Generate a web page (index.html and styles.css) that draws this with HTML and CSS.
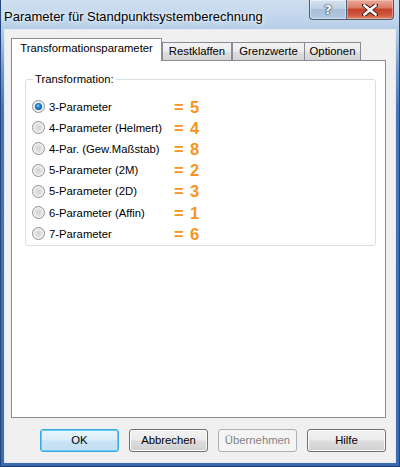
FILE: index.html
```html
<!DOCTYPE html>
<html lang="de">
<head>
<meta charset="utf-8">
<title>Parameter für Standpunktsystemberechnung</title>
<link rel="stylesheet" href="styles.css">
</head>
<body>
<div class="window">
  <div class="titlebar">
    <span class="title">Parameter für Standpunktsystemberechnung</span>
    <div class="caption-btns">
      <div class="cbtn help"><span class="qm">?</span></div>
      <div class="cbtn close">
        <svg width="16" height="12" viewBox="0 0 16 12">
          <path d="M2 1 L14 11 M14 1 L2 11" stroke="#4a1a12" stroke-width="4.4" stroke-linecap="round"/>
          <path d="M2.4 1.4 L13.6 10.6 M13.6 1.4 L2.4 10.6" stroke="#ffffff" stroke-width="2.6" stroke-linecap="round"/>
        </svg>
      </div>
    </div>
  </div>
  <div class="client">
    <div class="tabs">
      <div class="tab active">Transformationsparameter</div>
      <div class="tab w-rest">Restklaffen</div>
      <div class="tab w-grenz">Grenzwerte</div>
      <div class="tab w-opt">Optionen</div>
    </div>
    <div class="panel">
      <fieldset class="group">
        <legend>Transformation:</legend>
        <div class="rows">
          <div class="row"><span class="radio checked"></span><span class="label">3-Parameter</span><span class="eq">=</span><span class="num">5</span></div>
          <div class="row"><span class="radio"></span><span class="label">4-Parameter (Helmert)</span><span class="eq">=</span><span class="num">4</span></div>
          <div class="row"><span class="radio"></span><span class="label">4-Par. (Gew.Maßstab)</span><span class="eq">=</span><span class="num">8</span></div>
          <div class="row"><span class="radio"></span><span class="label">5-Parameter (2M)</span><span class="eq">=</span><span class="num">2</span></div>
          <div class="row"><span class="radio"></span><span class="label">5-Parameter (2D)</span><span class="eq">=</span><span class="num">3</span></div>
          <div class="row"><span class="radio"></span><span class="label">6-Parameter (Affin)</span><span class="eq">=</span><span class="num">1</span></div>
          <div class="row"><span class="radio"></span><span class="label">7-Parameter</span><span class="eq">=</span><span class="num">6</span></div>
        </div>
      </fieldset>
    </div>
    <div class="buttons">
      <div class="btn default">OK</div>
      <div class="btn">Abbrechen</div>
      <div class="btn disabled">Übernehmen</div>
      <div class="btn">Hilfe</div>
    </div>
  </div>
</div>
</body>
</html>
```
FILE: styles.css
```css
html, body {
  margin: 0;
  padding: 0;
}
body {
  width: 400px;
  height: 467px;
  overflow: hidden;
  font-family: "Liberation Sans", Arial, sans-serif;
}
.window {
  width: 400px;
  height: 467px;
  box-sizing: border-box;
  padding: 0 5px 5px 5px;
  background: linear-gradient(180deg, #cfdff0 0px, #bcd2ea 24px, #a6c2e4 40px, #6f98cf 70px, #4677bb 110px, #3a6bb2 100%);
  box-shadow: inset 1px 0 0 #23477c, inset -1px 0 0 #23477c, inset 0 -1px 0 #1e3c6a;
}
.titlebar {
  height: 30px;
  display: flex;
  align-items: flex-start;
}
.title {
  padding-top: 9px;
  margin-left: -1px;
  font-size: 13px;
  line-height: 15px;
  color: #000;
  white-space: nowrap;
  text-shadow: 0 0 6px rgba(255,255,255,0.9), 0 0 3px rgba(255,255,255,0.8);
}
.caption-btns {
  margin-left: auto;
  margin-right: 1px;
  display: flex;
}
.cbtn {
  height: 20px;
  box-sizing: border-box;
  border: 1px solid #4d5b70;
  border-top: none;
  display: flex;
  align-items: center;
  justify-content: center;
}
.help {
  width: 37px;
  border-right: none;
  border-bottom-left-radius: 4px;
  background: linear-gradient(180deg, #d5e1ee 0%, #c0d1e5 45%, #a9bed9 50%, #b3c8e2 100%);
  box-shadow: inset 0 0 0 1px rgba(255,255,255,0.45);
}
.qm {
  font-family: "DejaVu Sans", sans-serif;
  font-weight: bold;
  font-size: 13px;
  line-height: 13px;
  color: #fff;
  text-shadow: 0 0 1px #2d3c52, 0 0 1px #2d3c52, 0 0 2px #2d3c52;
}
.close {
  width: 48px;
  border-bottom-right-radius: 4px;
  background: linear-gradient(180deg, #e9a99a 0%, #db7f69 40%, #c6432a 50%, #cf5a40 80%, #e08a6c 100%);
  box-shadow: inset 0 0 0 1px rgba(255,220,210,0.45);
}
.close svg {
  display: block;
}
.client {
  height: 432px;
  box-sizing: border-box;
  background: #f0f0f0;
  padding: 8px 9px 0 6px;
  box-shadow: 0 0 0 1px #e3eaf3;
}
.tabs {
  display: flex;
  align-items: flex-end;
  height: 22px;
  position: relative;
  z-index: 1;
  font-size: 11.3px;
}
.tab {
  box-sizing: border-box;
  height: 18px;
  border: 1px solid #898c95;
  border-bottom: none;
  margin-right: -1px;
  background: linear-gradient(180deg, #f3f3f3 0%, #ebebeb 50%, #dedede 50%, #d6d6d6 100%);
  text-align: center;
  line-height: 16px;
  color: #000;
  white-space: nowrap;
}
.tab.active {
  width: 151px;
  height: 23px;
  margin-bottom: -1px;
  margin-right: 0;
  background: #fff;
  line-height: 19px;
}
.w-rest { width: 70px; }
.w-grenz { width: 73px; margin-left: 1px; }
.w-opt { width: 57px; }
.panel {
  height: 358px;
  box-sizing: border-box;
  border: 1px solid #898c95;
  background: #fff;
  padding: 11px 9px 0 13px;
}
.group {
  margin: 0;
  padding: 0;
  border: 1px solid #d5dfe5;
  border-radius: 3px;
  min-width: 0;
}
.group legend {
  margin-left: 7px;
  padding: 0 2px;
  font-size: 11.3px;
  line-height: 14px;
  color: #000;
}
.rows {
  padding: 10px 0 1px 6px;
}
.row {
  height: 21.2px;
  display: flex;
  align-items: center;
  font-size: 11.3px;
  color: #000;
}
.radio {
  width: 13px;
  height: 13px;
  box-sizing: border-box;
  border-radius: 50%;
  border: 1px solid #8e8f8f;
  background: radial-gradient(circle at 50% 50%, #d2d2d2 0%, #e4e4e4 45%, #f6f6f6 100%);
  box-shadow: inset 0 0 0 1px #f4f4f4;
  margin-right: 4px;
  flex: none;
  position: relative;
}
.radio.checked::after {
  content: "";
  position: absolute;
  left: 2px;
  top: 2px;
  width: 7px;
  height: 7px;
  border-radius: 50%;
  background: radial-gradient(circle at 45% 40%, #8ed6ff 0%, #1f7fd0 35%, #0b3c7a 100%);
}
.label {
  width: 125px;
  white-space: nowrap;
}
.eq, .num {
  color: #f7941d;
  font-weight: bold;
  font-size: 16.5px;
  line-height: 16px;
}
.eq {
  width: 16px;
}
.buttons {
  display: flex;
  justify-content: flex-end;
  gap: 10px;
  margin-top: 11px;
}
.btn {
  width: 79px;
  height: 23px;
  box-sizing: border-box;
  border: 1px solid #707070;
  border-radius: 3px;
  background: linear-gradient(180deg, #f2f2f2 0%, #ebebeb 48%, #dddddd 52%, #cfcfcf 100%);
  box-shadow: inset 0 0 0 1px #fbfbfb;
  font-size: 11.3px;
  line-height: 21px;
  text-align: center;
  color: #000;
}
.btn.default {
  border-color: #3aa7e4;
  background: linear-gradient(180deg, #e9f5fc 0%, #dcedf9 48%, #cbe4f5 52%, #c2def2 100%);
  box-shadow: inset 0 0 0 1px #66cdf5;
}
.btn.disabled {
  border-color: #adb2b5;
  background: #f4f4f4;
  box-shadow: none;
  color: #838383;
}
```
